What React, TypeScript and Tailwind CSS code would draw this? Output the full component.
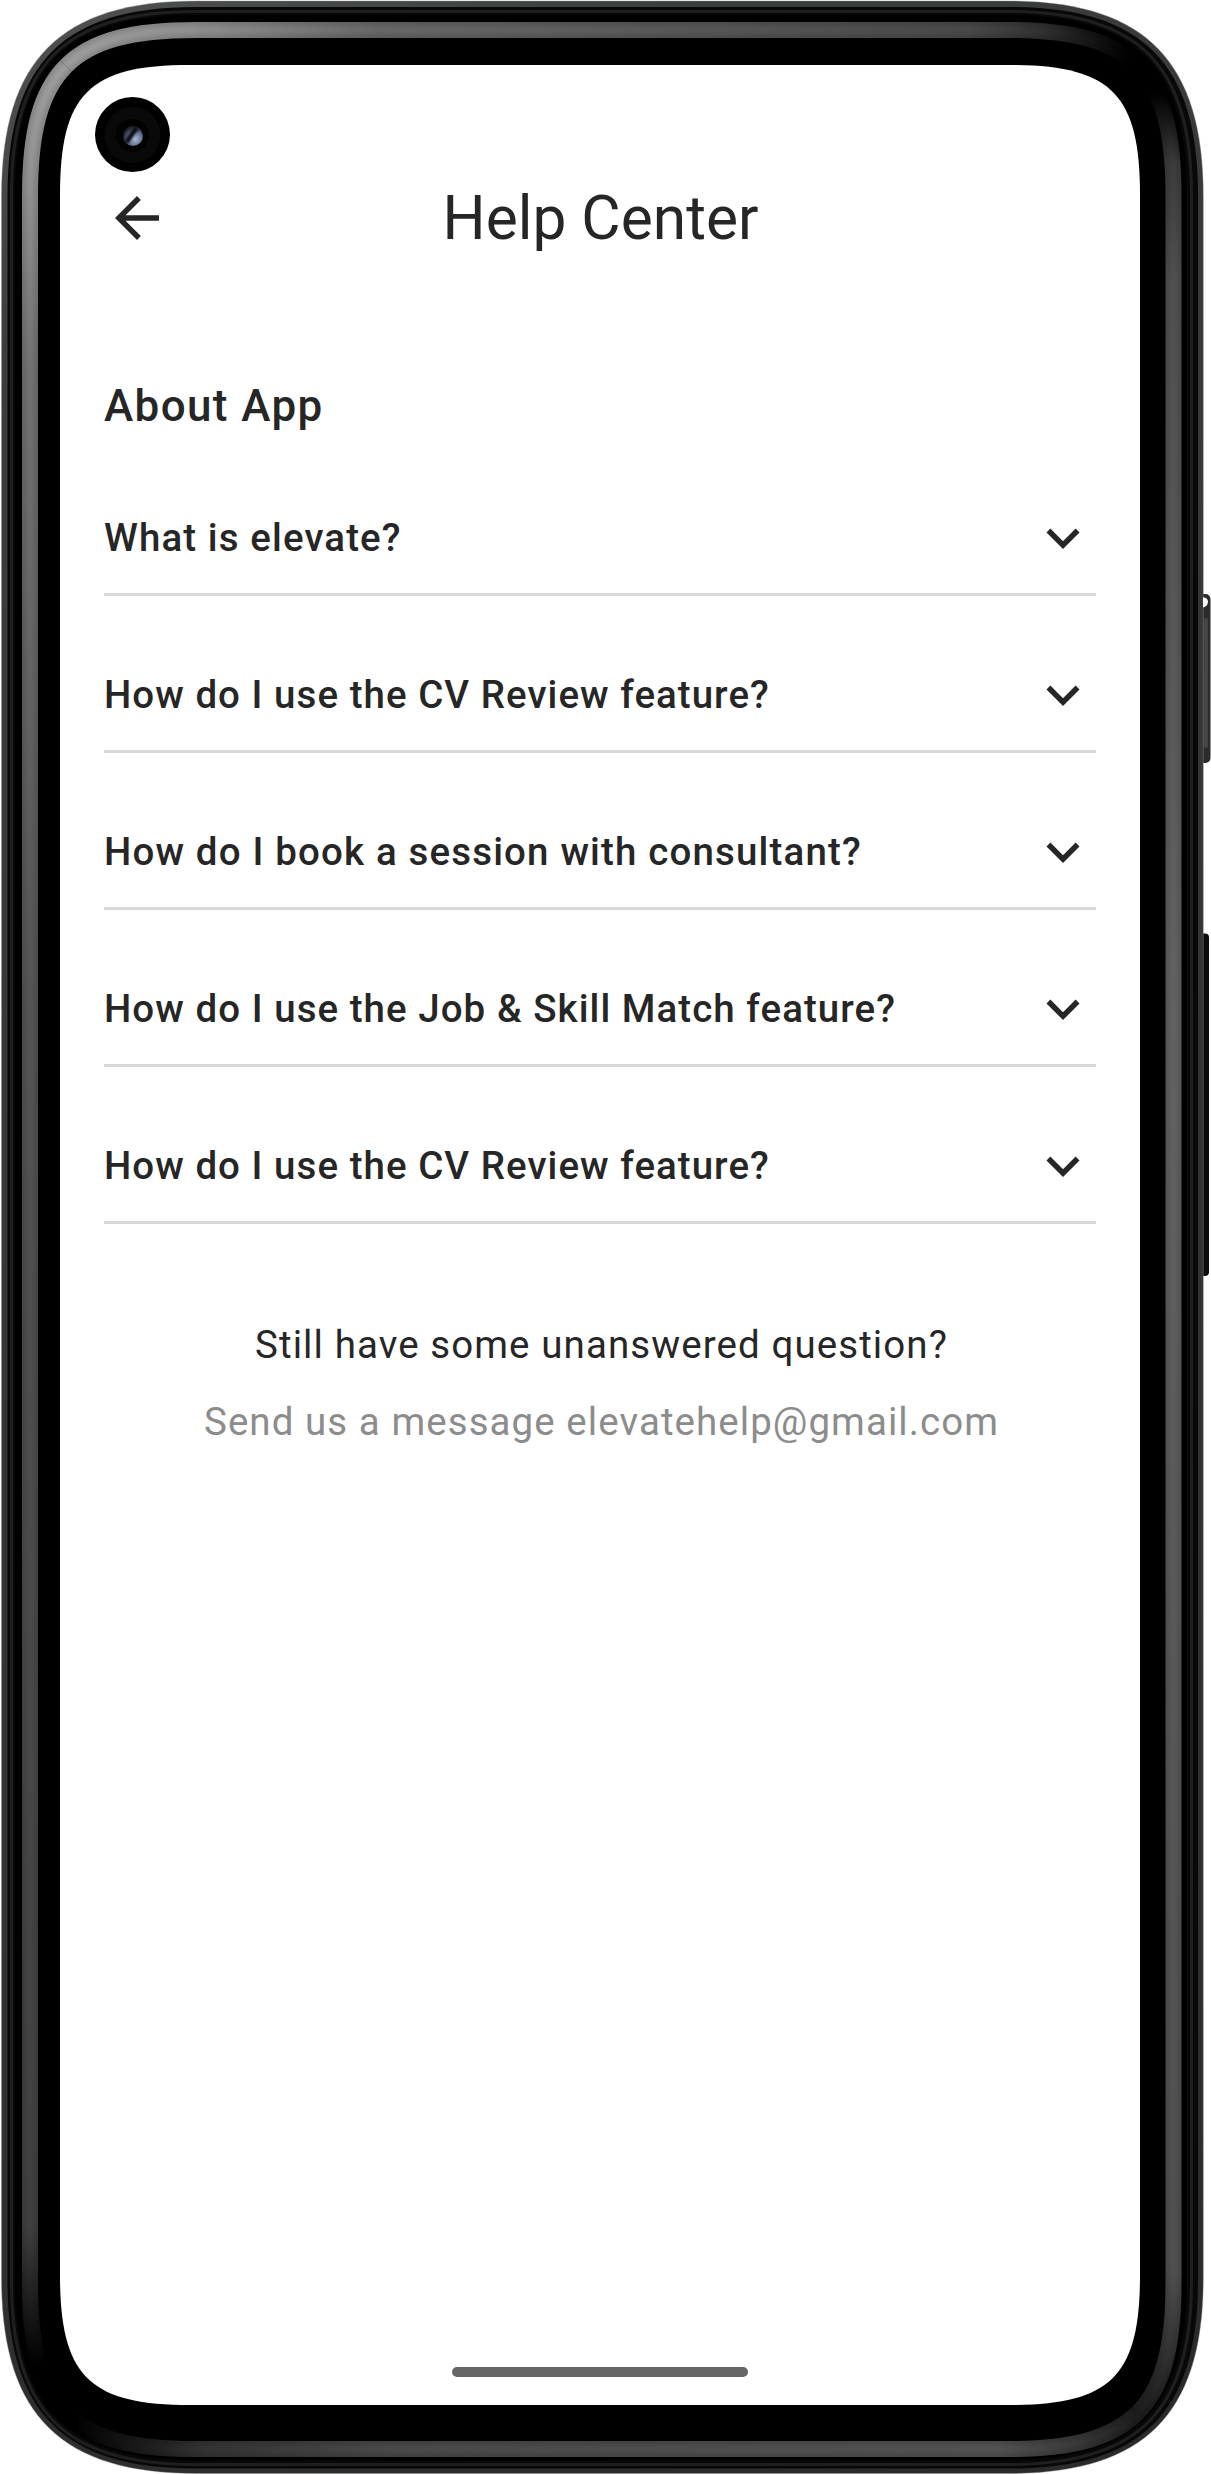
import { MdArrowBack, MdExpandMore } from "react-icons/md";

const questions = [
  { text: "What is elevate?", tracking: "tracking-[1.1px]" },
  { text: "How do I use the CV Review feature?", tracking: "tracking-[1.04px]" },
  { text: "How do I book a session with consultant?", tracking: "tracking-[1.16px]" },
  { text: "How do I use the Job & Skill Match feature?", tracking: "tracking-[1.05px]" },
  { text: "How do I use the CV Review feature?", tracking: "tracking-[1.04px]" },
];

// Closed outline with smoothed corners; `d` is the corner extent, `a` its tightness.
function outline(l: number, t: number, r: number, b: number, d: number, a: number) {
  return [
    `M${l} ${t + d}`,
    `C${l} ${t + a} ${l + a} ${t} ${l + d} ${t}`,
    `H${r - d}`,
    `C${r - a} ${t} ${r} ${t + a} ${r} ${t + d}`,
    `V${b - d}`,
    `C${r} ${b - a} ${r - a} ${b} ${r - d} ${b}`,
    `H${l + d}`,
    `C${l + a} ${b} ${l} ${b - a} ${l} ${b - d}Z`,
  ].join("");
}

// One side of the reflection, running from corner middle to corner middle.
function side(
  x0: number, y0: number, x1: number, y1: number,
  ux: number, uy: number, nx: number, ny: number,
  d: number, a: number,
) {
  const p = (x: number, y: number, s: number, along: number, inward: number) =>
    `${x + s * ux * along + nx * inward} ${y + s * uy * along + ny * inward}`;
  const m = (d + 3 * a) / 8;
  const q = (d + 2 * a) / 4;
  const h = (d + a) / 2;
  return (
    `M${p(x0, y0, 1, m, m)}C${p(x0, y0, 1, q, a / 4)} ${p(x0, y0, 1, h, 0)} ${p(x0, y0, 1, d, 0)}` +
    `L${p(x1, y1, -1, d, 0)}C${p(x1, y1, -1, h, 0)} ${p(x1, y1, -1, q, a / 4)} ${p(x1, y1, -1, m, m)}`
  );
}

const L = 30;
const T = 30;
const R = 1173.5;
const B = 2449;
const reflections = [
  { id: "gl", d: side(L, T, L, B, 0, 1, 1, 0, 165, 41) },
  { id: "gt", d: side(L, T, R, T, 1, 0, 0, 1, 165, 41) },
  { id: "gr", d: side(R, T, R, B, 0, 1, -1, 0, 165, 41) },
  { id: "gb", d: side(L, B, R, B, 1, 0, 0, -1, 165, 41) },
];

function PhoneFrame() {
  return (
    <svg className="absolute inset-0" width="1211" height="2474" viewBox="0 0 1211 2474" fill="none" aria-hidden="true">
      <defs>
        <linearGradient id="edge" x1="0" y1="0" x2="1211" y2="2474" gradientUnits="userSpaceOnUse">
          <stop offset="0" stopColor="#505250" />
          <stop offset=".12" stopColor="#3a3d3b" />
          <stop offset="1" stopColor="#2a2a2a" />
        </linearGradient>
        <linearGradient id="gl" x1="0" y1="60" x2="0" y2="2390" gradientUnits="userSpaceOnUse">
          <stop offset="0" stopColor="#8a8a8a" />
          <stop offset=".05" stopColor="#808080" />
          <stop offset=".13" stopColor="#646464" />
          <stop offset=".4" stopColor="#4a4a4a" />
          <stop offset=".93" stopColor="#383838" />
          <stop offset=".99" stopColor="#000" />
        </linearGradient>
        <linearGradient id="gt" x1="60" y1="0" x2="1130" y2="0" gradientUnits="userSpaceOnUse">
          <stop offset="0" stopColor="#8a8a8a" />
          <stop offset=".12" stopColor="#7e7e7e" />
          <stop offset=".3" stopColor="#5a5a5a" />
          <stop offset=".85" stopColor="#404040" />
          <stop offset=".92" stopColor="#2a2a2a" />
          <stop offset="1" stopColor="#000" />
        </linearGradient>
        <linearGradient id="gr" x1="0" y1="92" x2="0" y2="2410" gradientUnits="userSpaceOnUse">
          <stop offset="0" stopColor="#000" />
          <stop offset=".03" stopColor="#343434" />
          <stop offset=".08" stopColor="#464646" />
          <stop offset=".4" stopColor="#565656" />
          <stop offset=".94" stopColor="#464646" />
          <stop offset="1" stopColor="#1a1a1a" />
        </linearGradient>
        <linearGradient id="gb" x1="72" y1="0" x2="1135" y2="0" gradientUnits="userSpaceOnUse">
          <stop offset="0" stopColor="#000" />
          <stop offset=".12" stopColor="#2c2c2c" />
          <stop offset=".3" stopColor="#404040" />
          <stop offset=".87" stopColor="#484848" />
          <stop offset=".95" stopColor="#303030" />
          <stop offset="1" stopColor="#1a1a1a" />
        </linearGradient>
        <radialGradient id="lens" cx=".6" cy=".65" r=".6">
          <stop offset="0" stopColor="#a9bad8" />
          <stop offset=".6" stopColor="#64718e" />
          <stop offset="1" stopColor="#20232d" />
        </radialGradient>
      </defs>
      {/* Side buttons */}
      <rect x="1196" y="594" width="14.5" height="169" rx="5" fill="#2b2b2b" />
      <rect x="1203.5" y="618" width="4.5" height="130" rx="2" fill="#454545" />
      <rect x="1196" y="933.5" width="13" height="342.5" rx="4" fill="#0b0b0b" />
      {/* Metal body and its seams */}
      <path d={outline(1.5, 1, 1203.3, 2473.5, 195, 59)} fill="url(#edge)" />
      <path d={outline(1.5, 1, 1203.3, 2473.5, 195, 59)} stroke="#8d8f8c" strokeOpacity=".4" />
      <path d="M1203 597.500c3.500 0 5 2 5 4.500s-2 5-5 5.500z" fill="#fff" />
      <path d={outline(7.5, 7, 1198, 2468.5, 188, 56)} fill="#080808" />
      <path d={outline(11.5, 11.5, 1191.5, 2464.5, 183, 53)} stroke="#1f1f1f" strokeWidth="3" />
      <path d={outline(15, 15, 1187, 2460, 180, 51)} fill="#000" />
      {reflections.map(({ id, d }) => (
        <path key={id} d={d} stroke={`url(#${id})`} strokeWidth="16" />
      ))}
      {reflections.map(({ id, d }) => (
        <path key={id} d={d} stroke={`url(#${id})`} strokeWidth="8" className="opacity-60 brightness-125 blur-[2px]" />
      ))}
      {/* Display glass */}
      <path d={outline(60, 65, 1140, 2405, 130, 29)} fill="#fff" />
      {/* Front camera */}
      <circle cx="132.5" cy="134.5" r="37.5" fill="#000" />
      <circle cx="132.5" cy="135" r="28" fill="#090909" />
      <circle cx="132.5" cy="135.5" r="16.5" fill="#020202" />
      <circle cx="133" cy="136" r="10" fill="url(#lens)" />
      <path d="M126 142c4-2 4-8 11-14" stroke="#090b12" strokeWidth="4.5" className="blur-[1px]" />
    </svg>
  );
}

export default function App() {
  return (
    <div className="relative h-[2474px] w-[1211px] overflow-hidden bg-white font-['Roboto',sans-serif] text-[#262626]">
      <PhoneFrame />
      <div className="relative flex h-full flex-col pt-[182px] pr-[115px] pb-[97px] pl-[104px]">
        <header className="grid h-[72px] grid-cols-[66px_1fr_66px] items-center">
          <button aria-label="Back">
            <MdArrowBack size={66} />
          </button>
          <h1 className="h-[72px] pt-px pl-px text-center text-[60.46px] leading-[72px]">Help Center</h1>
        </header>

        <h2 className="mt-[125px] text-[43.97px] leading-[54px] font-medium tracking-[1.4px]">About App</h2>

        <ul className="mt-[79px] flex flex-col gap-[73px]">
          {questions.map(({ text, tracking }, index) => (
            <li key={index} className="flex h-[84px] items-start justify-between border-b-3 border-[#d9d9d9]">
              <span className={`text-[38.47px] leading-[52px] font-medium ${tracking}`}>{text}</span>
              <MdExpandMore size={66} className="-mt-[7px] shrink-0" />
            </li>
          ))}
        </ul>

        <footer className="mt-[95px] flex flex-col items-center gap-[25px] pl-[3px] text-[38.47px] leading-[52px] tracking-[1.1px]">
          <p>Still have some unanswered question?</p>
          <p className="tracking-[1.07px] text-[#8c8c8c]">Send us a message elevatehelp@gmail.com</p>
        </footer>

        <div className="mx-auto mt-auto h-[10px] w-[296px] rounded-full bg-[#666]" />
      </div>
    </div>
  );
}
